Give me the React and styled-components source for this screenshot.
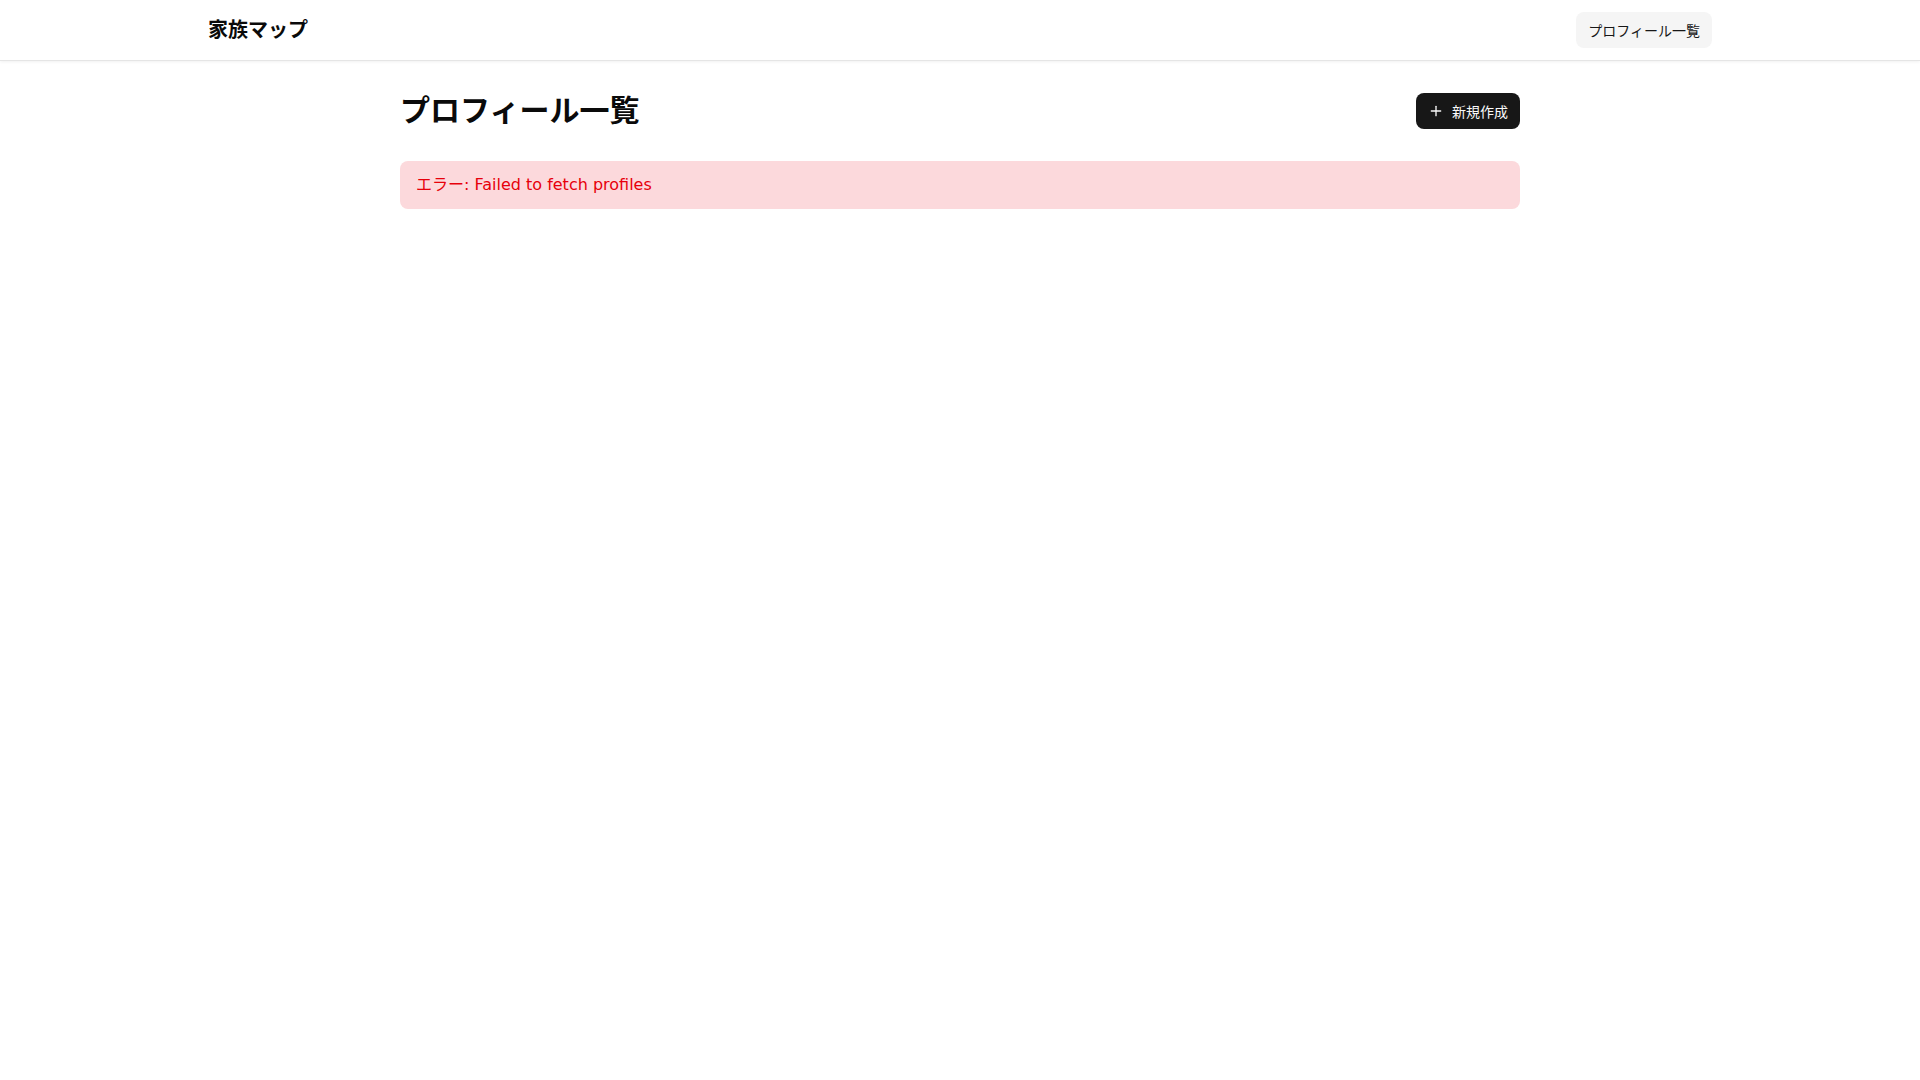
import React from "react";
import styled, { createGlobalStyle } from "styled-components";

const Global = createGlobalStyle`
  * { box-sizing: border-box; }
  html, body { margin: 0; padding: 0; background: #ffffff; }
  body {
    font-family: "DejaVu Sans", "Noto Sans CJK JP", sans-serif;
    color: #0a0a0a;
  }
`;

const Header = styled.header`
  height: 61px;
  background: #ffffff;
  border-bottom: 1px solid #e5e5e5;
  box-shadow: 0 1px 3px rgba(0, 0, 0, 0.06);
`;

const HeaderInner = styled.div`
  max-width: 1536px;
  height: 100%;
  margin: 0 auto;
  padding: 0 16px;
  display: flex;
  align-items: center;
  justify-content: space-between;
`;

const Logo = styled.a`
  font-size: 20px;
  line-height: 28px;
  font-weight: 700;
  color: #0a0a0a;
  text-decoration: none;
`;

const NavButton = styled.a`
  display: inline-flex;
  align-items: center;
  height: 36px;
  padding: 0 12px;
  border-radius: 8px;
  background: #f5f5f5;
  color: #171717;
  font-size: 14px;
  text-decoration: none;
`;

const Main = styled.main`
  max-width: 1152px;
  margin: 0 auto;
  padding: 32px 16px;
`;

const TitleRow = styled.div`
  display: flex;
  align-items: center;
  justify-content: space-between;
  margin-bottom: 32px;
`;

const Title = styled.h1`
  margin: 0;
  font-size: 30px;
  line-height: 36px;
  font-weight: 700;
`;

const PrimaryButton = styled.button`
  display: inline-flex;
  align-items: center;
  gap: 8px;
  height: 36px;
  padding: 0 12px;
  border: none;
  border-radius: 8px;
  background: #171717;
  color: #fafafa;
  font-family: inherit;
  font-size: 14px;
  cursor: pointer;
`;

const ErrorBox = styled.div`
  padding: 12px 16px;
  border-radius: 8px;
  background: #fcd9dc;
  color: #e7000b;
  font-size: 16px;
  line-height: 24px;
`;

const PlusIcon = () => (
  <svg width="16" height="16" viewBox="0 0 24 24" fill="none" stroke="currentColor" strokeWidth="2" strokeLinecap="round" strokeLinejoin="round">
    <path d="M5 12h14" />
    <path d="M12 5v14" />
  </svg>
);

export default function App() {
  return (
    <>
      <Global />
      <Header>
        <HeaderInner>
          <Logo href="#">家族マップ</Logo>
          <NavButton href="#">プロフィール一覧</NavButton>
        </HeaderInner>
      </Header>
      <Main>
        <TitleRow>
          <Title>プロフィール一覧</Title>
          <PrimaryButton>
            <PlusIcon />
            新規作成
          </PrimaryButton>
        </TitleRow>
        <ErrorBox>エラー: Failed to fetch profiles</ErrorBox>
      </Main>
    </>
  );
}
